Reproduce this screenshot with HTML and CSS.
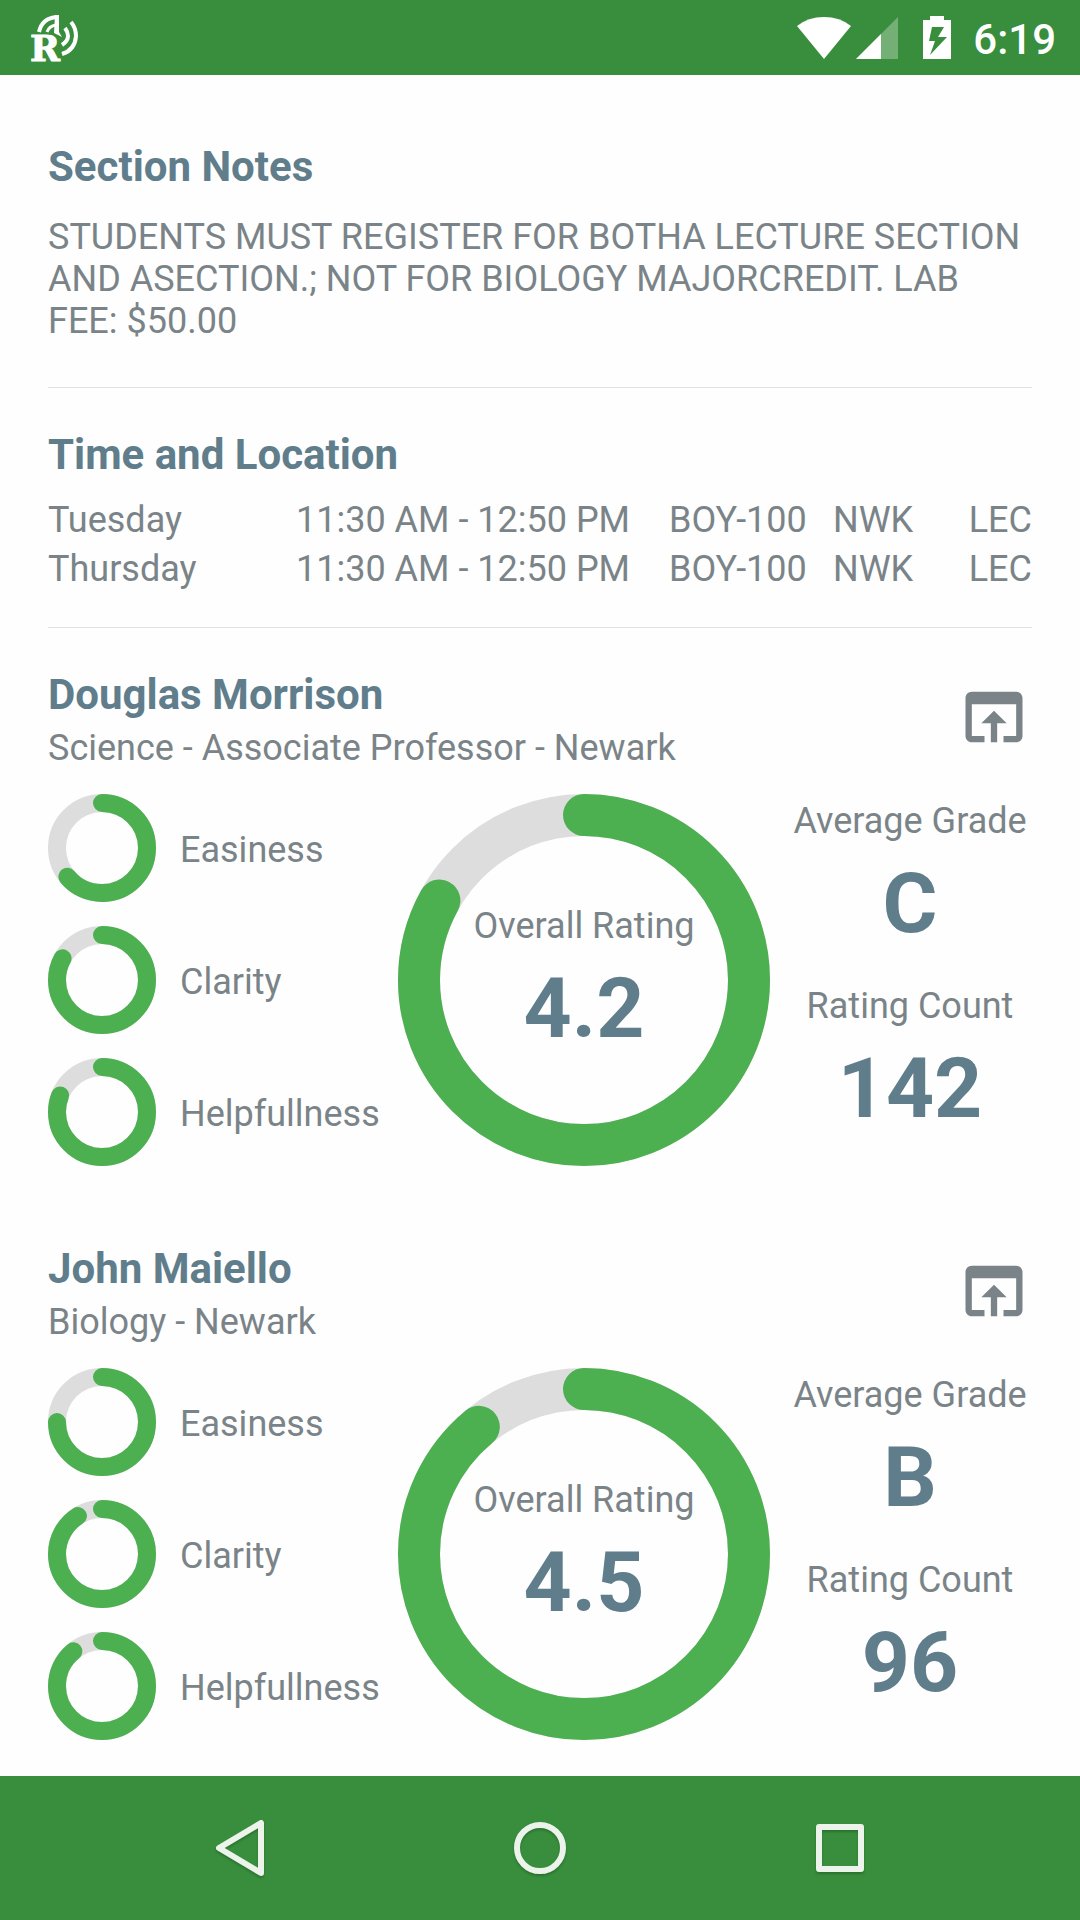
FILE: index.html
```html
<!DOCTYPE html>
<html lang="en">
<head>
<meta charset="utf-8">
<meta name="viewport" content="width=device-width, initial-scale=1">
<title>Section Details</title>
<link rel="stylesheet" href="styles.css">
</head>
<body>
<header class="status-bar">
  <svg class="app-logo" viewBox="0 0 54 64" aria-hidden="true">
    <text class="logo-letter" x="2" y="55">R</text>
    <path d="M11 26Q14 12 29 11" fill="none" stroke="#fff" stroke-width="4"/>
    <path d="M19 26Q21 20 28 19" fill="none" stroke="#fff" stroke-width="3"/>
    <path d="M27 9H31V26L34 31L26 27Z" fill="#fff"/>
    <path d="M43 16Q48 22 48 30Q47 44 34 48" fill="none" stroke="#fff" stroke-width="4"/>
    <path d="M37 22Q40 26 40 30Q40 35 34 39" fill="none" stroke="#fff" stroke-width="4"/>
  </svg>
  <div class="status-icons">
    <svg class="wifi" viewBox="0 0 54 44" aria-hidden="true"><path d="M0 10Q11 1 27 1T54 10L27 43Z" fill="#fff"/></svg>
    <svg class="signal" viewBox="0 0 42 44" aria-hidden="true"><path d="M0 43L42 1V43Z" fill="#fff" opacity=".3"/><path d="M0 43L25 18V43Z" fill="#fff"/></svg>
    <svg class="battery" viewBox="0 0 30 44" aria-hidden="true"><path d="M1 4H8V0H22V4H29V43H1ZM10 11L7 25H13L8 39L25 21H16L22 11Z" fill="#fff" fill-rule="evenodd"/></svg>
    <span class="clock">6:19</span>
  </div>
</header>

<main class="content">
  <section class="block">
    <h2 class="title">Section Notes</h2>
    <p class="notes">STUDENTS MUST REGISTER FOR BOTHA LECTURE SECTION AND ASECTION.; NOT FOR BIOLOGY MAJORCREDIT. LAB FEE: $50.00</p>
  </section>

  <section class="block">
    <h2 class="title">Time and Location</h2>
    <table class="times">
      <tbody>
        <tr><td class="day">Tuesday</td><td class="hours">11:30 AM - 12:50 PM</td><td class="room">BOY-100</td><td class="campus">NWK</td><td class="kind">LEC</td></tr>
        <tr><td class="day">Thursday</td><td class="hours">11:30 AM - 12:50 PM</td><td class="room">BOY-100</td><td class="campus">NWK</td><td class="kind">LEC</td></tr>
      </tbody>
    </table>
  </section>

  <article class="professor">
    <header class="professor-head">
      <div class="professor-name">
        <h2 class="title">Douglas Morrison</h2>
        <p class="role">Science - Associate Professor - Newark</p>
      </div>
      <button class="open" type="button" aria-label="Open ratings in browser">
        <svg viewBox="0 0 24 24" aria-hidden="true"><path d="M19 4H5c-1.110 0-2 .9-2 2v12c0 1.100.890 2 2 2h4v-2H5V8h14v10h-4v2h4c1.100 0 2-.9 2-2V6c0-1.100-.890-2-2-2zm-7 6l-4 4h3v6h2v-6h3l-4-4z"/></svg>
      </button>
    </header>
    <div class="ratings">
      <ul class="scores">
        <li class="score"><svg class="ring" viewBox="0 0 108 108" aria-hidden="true"><circle class="track" cx="54" cy="54" r="45"/><circle class="bar" cx="54" cy="54" r="45" pathLength="100" stroke-dasharray="64 100"/></svg><span class="score-name">Easiness</span></li>
        <li class="score"><svg class="ring" viewBox="0 0 108 108" aria-hidden="true"><circle class="track" cx="54" cy="54" r="45"/><circle class="bar" cx="54" cy="54" r="45" pathLength="100" stroke-dasharray="83 100"/></svg><span class="score-name">Clarity</span></li>
        <li class="score"><svg class="ring" viewBox="0 0 108 108" aria-hidden="true"><circle class="track" cx="54" cy="54" r="45"/><circle class="bar" cx="54" cy="54" r="45" pathLength="100" stroke-dasharray="81 100"/></svg><span class="score-name">Helpfullness</span></li>
      </ul>
      <div class="overall">
        <svg class="ring large" viewBox="0 0 372 372" aria-hidden="true"><circle class="track" cx="186" cy="186" r="165"/><circle class="bar" cx="186" cy="186" r="165" pathLength="100" stroke-dasharray="83 100"/></svg>
        <div class="stat"><span>Overall Rating</span><strong class="value">4.2</strong></div>
      </div>
      <div class="stats">
        <div class="stat"><span>Average Grade</span><strong class="value">C</strong></div>
        <div class="stat"><span>Rating Count</span><strong class="value">142</strong></div>
      </div>
    </div>
  </article>

  <article class="professor">
    <header class="professor-head">
      <div class="professor-name">
        <h2 class="title">John Maiello</h2>
        <p class="role">Biology - Newark</p>
      </div>
      <button class="open" type="button" aria-label="Open ratings in browser">
        <svg viewBox="0 0 24 24" aria-hidden="true"><path d="M19 4H5c-1.110 0-2 .9-2 2v12c0 1.100.890 2 2 2h4v-2H5V8h14v10h-4v2h4c1.100 0 2-.9 2-2V6c0-1.100-.890-2-2-2zm-7 6l-4 4h3v6h2v-6h3l-4-4z"/></svg>
      </button>
    </header>
    <div class="ratings">
      <ul class="scores">
        <li class="score"><svg class="ring" viewBox="0 0 108 108" aria-hidden="true"><circle class="track" cx="54" cy="54" r="45"/><circle class="bar" cx="54" cy="54" r="45" pathLength="100" stroke-dasharray="75 100"/></svg><span class="score-name">Easiness</span></li>
        <li class="score"><svg class="ring" viewBox="0 0 108 108" aria-hidden="true"><circle class="track" cx="54" cy="54" r="45"/><circle class="bar" cx="54" cy="54" r="45" pathLength="100" stroke-dasharray="91 100"/></svg><span class="score-name">Clarity</span></li>
        <li class="score"><svg class="ring" viewBox="0 0 108 108" aria-hidden="true"><circle class="track" cx="54" cy="54" r="45"/><circle class="bar" cx="54" cy="54" r="45" pathLength="100" stroke-dasharray="89 100"/></svg><span class="score-name">Helpfullness</span></li>
      </ul>
      <div class="overall">
        <svg class="ring large" viewBox="0 0 372 372" aria-hidden="true"><circle class="track" cx="186" cy="186" r="165"/><circle class="bar" cx="186" cy="186" r="165" pathLength="100" stroke-dasharray="89 100"/></svg>
        <div class="stat"><span>Overall Rating</span><strong class="value">4.5</strong></div>
      </div>
      <div class="stats">
        <div class="stat"><span>Average Grade</span><strong class="value">B</strong></div>
        <div class="stat"><span>Rating Count</span><strong class="value">96</strong></div>
      </div>
    </div>
  </article>
</main>

<nav class="nav-bar" aria-label="System">
  <button class="nav-button" type="button" aria-label="Back"><svg viewBox="0 0 60 60" aria-hidden="true"><path d="M51 5V55L9 30Z"/></svg></button>
  <button class="nav-button" type="button" aria-label="Home"><svg viewBox="0 0 60 60" aria-hidden="true"><circle cx="30" cy="30" r="23"/></svg></button>
  <button class="nav-button" type="button" aria-label="Recent apps"><svg viewBox="0 0 60 60" aria-hidden="true"><rect x="9" y="9" width="42" height="42"/></svg></button>
</nav>
</body>
</html>
```
FILE: styles.css
```css
* {
  box-sizing: border-box;
}

body {
  margin: 0;
  min-height: 100vh;
  display: flex;
  flex-direction: column;
  background: #fefefe;
  color: #7a8488;
  font-family: Roboto, sans-serif;
  font-size: 36px;
  line-height: 42px;
}

h2,
p,
ul {
  margin: 0;
  padding: 0;
}

button {
  padding: 0;
  border: 0;
  background: none;
}

svg {
  display: block;
}

/* Status bar */
.status-bar {
  display: flex;
  align-items: center;
  justify-content: space-between;
  height: 75px;
  padding: 0 24px 0 28px;
  background: #388e3c;
  color: #fff;
}

.app-logo {
  width: 54px;
  height: 64px;
  overflow: visible;
}

.logo-letter {
  font: bold 36px "DejaVu Serif", serif;
  fill: #fff;
  stroke: #fff;
  stroke-width: 1px;
}

.status-icons {
  display: flex;
  align-items: center;
}

.wifi {
  width: 54px;
  height: 44px;
}

.signal {
  width: 42px;
  height: 44px;
  margin-left: 5px;
}

.battery {
  width: 30px;
  height: 44px;
  margin: 0 21px 0 24px;
}

.clock {
  padding-top: 4px;
  font-size: 42px;
  font-weight: 500;
  line-height: 49px;
}

/* Content */
.content {
  flex: 1;
  padding: 67px 48px 36px;
}

.title {
  color: #607d8b;
  font-size: 42px;
  font-weight: 700;
  line-height: 49px;
}

.block {
  margin-bottom: 42px;
  border-bottom: 1px solid #e1e3e3;
}

.notes {
  padding: 25px 0 45px;
}

.times {
  width: 100%;
  margin: 16px 0 34px;
  border-collapse: collapse;
  table-layout: fixed;
}

.times td {
  height: 49px;
  padding: 0;
  white-space: nowrap;
}

.times .day {
  width: 248px;
}

.times .hours {
  width: 373px;
}

.times .room {
  width: 164px;
}

.times .kind {
  text-align: right;
}

/* Professors */
.professor + .professor {
  margin-top: 78px;
}

.professor-head {
  display: flex;
  justify-content: space-between;
  align-items: flex-start;
}

.role {
  margin-top: 8px;
}

.open {
  margin-top: 9px;
}

.open svg {
  width: 76px;
  height: 76px;
  fill: #7a8488;
}

.ratings {
  display: flex;
  margin-top: 25px;
}

.scores {
  display: flex;
  flex-direction: column;
  gap: 24px;
  width: 350px;
  list-style: none;
}

.score {
  display: flex;
  align-items: center;
  gap: 24px;
}

.score-name {
  padding-top: 4px;
}

.ring {
  width: 108px;
  height: 108px;
  transform: rotate(-90deg);
  fill: none;
  stroke-width: 18px;
}

.ring.large {
  width: 372px;
  height: 372px;
  stroke-width: 42px;
}

.track {
  stroke: #ddd;
}

.bar {
  stroke: #4caf50;
  stroke-linecap: round;
}

.overall {
  display: grid;
  place-items: center;
}

.overall > * {
  grid-area: 1 / 1;
}

.overall .stat {
  padding-top: 3px;
}

.stat {
  display: flex;
  flex-direction: column;
  align-items: center;
  gap: 12px;
}

.value {
  color: #607d8b;
  font-size: 84px;
  font-weight: 700;
  line-height: 99px;
}

.stats {
  flex: 1;
  display: flex;
  flex-direction: column;
  gap: 32px;
  padding: 6px 0 0 18px;
}

/* Navigation bar */
.nav-bar {
  display: flex;
  justify-content: center;
  height: 144px;
  padding: 0 90px;
  background: #388e3c;
}

.nav-button {
  flex: 1;
  display: grid;
  place-items: center;
}

.nav-button svg {
  width: 60px;
  height: 60px;
  fill: none;
  stroke: #ebf3eb;
  stroke-width: 6px;
  stroke-linejoin: round;
  filter: drop-shadow(0 2px 1px rgba(0, 0, 0, 0.2));
}
```
